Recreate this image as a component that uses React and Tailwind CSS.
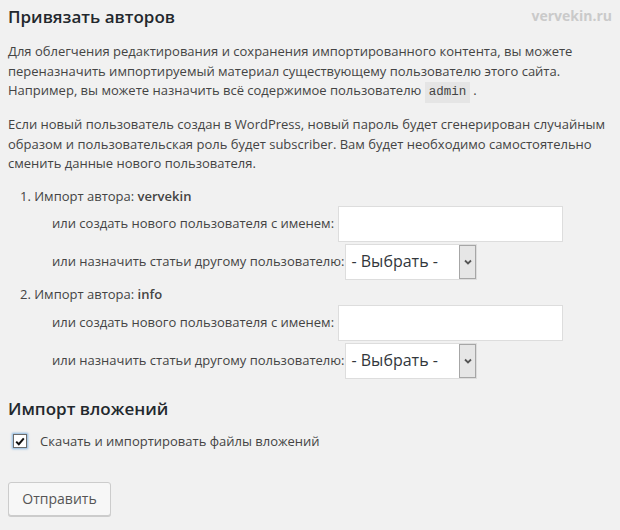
import React from "react";

function FakeSelect() {
  return (
    <div className="flex h-[36px] w-[132px] border border-[#dddddd] bg-white">
      <div className="flex flex-1 items-center pl-[5px] text-[16px] text-[#32373c]">- Выбрать -</div>
      <div className="flex w-[17px] items-center justify-center border border-[#a6a6a6] bg-[#e6e6e6]">
        <svg width="8" height="6" viewBox="0 0 8 6">
          <path d="M1 1.5 L4 4.5 L7 1.5" fill="none" stroke="#555" strokeWidth="1.8" />
        </svg>
      </div>
    </div>
  );
}

function AuthorItem({ n, name, first }) {
  return (
    <li className={first ? "" : "mt-[5px]"}>
      <div className="pl-[12px] leading-[19.5px]">
        {n}. Импорт автора: <strong className="font-semibold">{name}</strong>
      </div>
      <div className="flex items-center pl-[44px]">
        <span className="mr-[4px]">или создать нового пользователя с именем:</span>
        <div className="h-[36px] w-[225px] border border-[#dddddd] bg-white"></div>
      </div>
      <div className="mt-[2px] flex items-center pl-[44px]">
        <span className="mr-[1px]">или назначить статьи другому пользователю:</span>
        <FakeSelect />
      </div>
    </li>
  );
}

export default function App() {
  return (
    <div
      className="h-[530px] w-[620px] overflow-hidden bg-[#f1f1f1] px-[8px] text-[13px] leading-[19.5px] text-[#444444]"
      style={{ fontFamily: '"Open Sans", sans-serif' }}
    >
      <div className="flex items-start justify-between pt-[5px]">
        <h2 className="text-[17px] font-semibold leading-[24px] text-[#23282d]">Привязать авторов</h2>
        <div className="pt-[1px] text-[14px] font-bold leading-[20px] text-[#cacaca]">vervekin.ru</div>
      </div>
      <p className="mt-[13px]">
        Для облегчения редактирования и сохранения импортированного контента, вы можете переназначить
        импортируемый материал существующему пользователю этого сайта. Например, вы можете назначить всё
        содержимое пользователю{" "}
        <code
          className="mr-[3px] inline-block -my-[1px] bg-[#e5e5e5] px-[4px] text-[12.5px] leading-[21px] text-[#444]"
          style={{ fontFamily: 'Consolas, "Liberation Mono", monospace' }}
        >
          admin
        </code>
        <span>.</span>
      </p>
      <p className="mt-[13px]">
        Если новый пользователь создан в WordPress, новый пароль будет сгенерирован случайным образом и
        пользовательская роль будет subscriber. Вам будет необходимо самостоятельно сменить данные нового
        пользователя.
      </p>
      <ol className="mt-[13px]">
        <AuthorItem n={1} name="vervekin" first />
        <AuthorItem n={2} name="info" />
      </ol>
      <h2 className="mt-[18px] text-[17px] font-semibold leading-[24px] text-[#23282d]">Импорт вложений</h2>
      <div className="mt-[11px] flex items-center">
        <div className="ml-[5px] flex h-[14px] w-[14px] items-center justify-center border border-[#6b6b6b] bg-white shadow-[0_0_2px_1px_rgba(91,157,217,0.7)]">
          <svg width="10" height="9" viewBox="0 0 10 9">
            <path d="M1.2 4.6 L3.8 7.2 L8.8 1.4" fill="none" stroke="#111" strokeWidth="2" />
          </svg>
        </div>
        <span className="ml-[13px]">Скачать и импортировать файлы вложений</span>
      </div>
      <button className="mt-[31px] h-[34px] w-[103px] rounded-[3px] border border-[#cccccc] bg-[#f7f7f7] text-[14px] text-[#555555] shadow-[0_1px_0_#cccccc]">
        Отправить
      </button>
    </div>
  );
}
